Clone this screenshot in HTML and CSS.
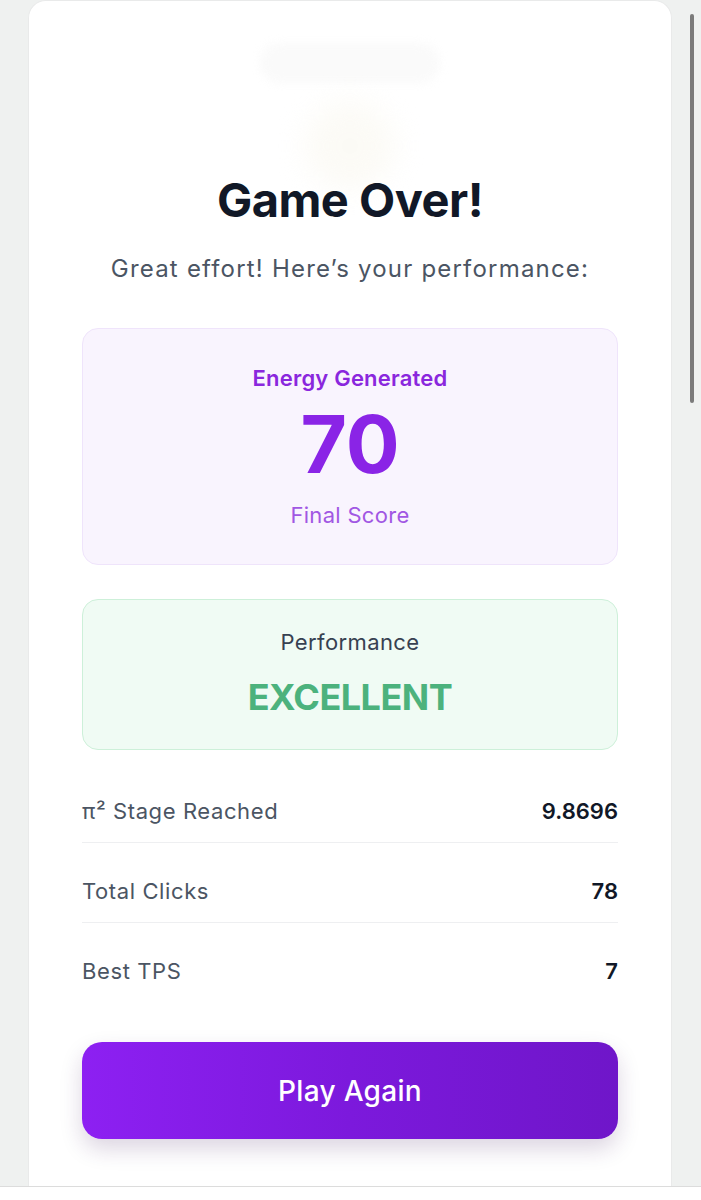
FILE: index.html
```html
<!DOCTYPE html>
<html lang="en">
<head>
    <meta charset="UTF-8">
    <meta name="viewport" content="width=device-width, initial-scale=1.0">
    <title>Game Over</title>
    <link rel="stylesheet" href="styles.css">
</head>
<body>
    <div class="page">
        <main class="card">
            <div class="ghost-pill"></div>
            <div class="ghost-orb"></div>
            <h1 class="title">Game Over!</h1>
            <p class="subtitle">Great effort! Here’s your performance:</p>

            <section class="score-box">
                <p class="score-label">Energy Generated</p>
                <p class="score-value">70</p>
                <p class="score-caption">Final Score</p>
            </section>

            <section class="rating-box">
                <p class="rating-label">Performance</p>
                <p class="rating-value">EXCELLENT</p>
            </section>

            <div class="stats">
                <div class="stat">
                    <span class="stat-name">π² Stage Reached</span>
                    <span class="stat-value">9.8696</span>
                </div>
                <div class="stat">
                    <span class="stat-name">Total Clicks</span>
                    <span class="stat-value">78</span>
                </div>
                <div class="stat">
                    <span class="stat-name">Best TPS</span>
                    <span class="stat-value">7</span>
                </div>
            </div>

            <button class="play-btn" type="button">Play Again</button>
        </main>
    </div>
    <div class="bottom-bar"></div>
    <div class="scroll-thumb"></div>
</body>
</html>
```

FILE: styles.css
```css
html, body {
    margin: 0;
    padding: 0;
    height: 100%;
    overflow: hidden;
}
body {
    font-family: Inter, "Liberation Sans", sans-serif;
    background-color: #eff1f0;
}
p {
    margin: 0;
}
.page {
    height: 1186px;
    padding: 0 29px 0 28px;
    box-sizing: border-box;
}
.card {
    position: relative;
    height: 100%;
    box-sizing: border-box;
    background-color: #fff;
    border: 1px solid #e9eaea;
    border-bottom: none;
    border-radius: 18px 18px 0 0;
    padding: 0 53px;
    overflow: hidden;
}
.ghost-pill {
    position: absolute;
    top: 42px;
    left: 231px;
    width: 180px;
    height: 40px;
    border-radius: 20px;
    background-color: #f8f8f8;
    filter: blur(5px);
    opacity: 0.7;
}
.ghost-orb {
    position: absolute;
    top: 100px;
    left: 276px;
    width: 90px;
    height: 90px;
    border-radius: 50%;
    background-color: #faf8f0;
    filter: blur(14px);
    opacity: 0.6;
}
.title {
    position: relative;
    margin: 171px 0 0;
    text-align: center;
    font-size: 47px;
    line-height: 56px;
    font-weight: 700;
    letter-spacing: -0.5px;
    color: #111827;
}
.subtitle {
    margin-top: 25px;
    text-align: center;
    font-size: 24px;
    line-height: 32px;
    letter-spacing: 1.2px;
    color: #4b5563;
}
.score-box {
    margin-top: 43px;
    height: 237px;
    box-sizing: border-box;
    padding-top: 35px;
    background-color: #f9f4fe;
    border: 1px solid #efe4fb;
    border-radius: 16px;
    text-align: center;
}
.score-label {
    font-size: 22px;
    line-height: 28px;
    font-weight: 600;
    letter-spacing: 0.2px;
    color: #8a27dd;
}
.score-value {
    margin-top: 12px;
    font-size: 80px;
    line-height: 80px;
    font-weight: 700;
    color: #8a24e6;
}
.score-caption {
    margin-top: 17px;
    font-size: 22px;
    line-height: 28px;
    letter-spacing: 0.3px;
    color: #a157e3;
}
.rating-box {
    margin-top: 34px;
    height: 151px;
    box-sizing: border-box;
    padding-top: 28px;
    background-color: #f0fbf4;
    border: 1px solid #cdf0d9;
    border-radius: 16px;
    text-align: center;
}
.rating-label {
    font-size: 22px;
    line-height: 28px;
    letter-spacing: 0.4px;
    color: #374151;
}
.rating-value {
    margin-top: 19px;
    font-size: 36px;
    line-height: 44px;
    font-weight: 700;
    letter-spacing: -0.5px;
    color: #4cb27d;
}
.stats {
    margin-top: 47px;
    display: flex;
    flex-direction: column;
    gap: 34px;
}
.stat {
    display: flex;
    justify-content: space-between;
    font-size: 22px;
    line-height: 28px;
    padding-bottom: 17px;
    border-bottom: 1px solid #eeeff1;
}
.stat:last-child {
    padding-bottom: 0;
    border-bottom: none;
}
.stat-name {
    letter-spacing: 0.6px;
    color: #4b5563;
}
.stat-value {
    font-weight: 600;
    color: #111827;
}
.play-btn {
    display: block;
    width: 100%;
    height: 97px;
    margin-top: 57px;
    border: none;
    border-radius: 20px;
    background: linear-gradient(90deg, #8d20f2 0%, #7c19dc 50%, #6f16c9 100%);
    box-shadow: 0 10px 22px rgba(60, 20, 90, 0.18);
    color: #fff;
    font-family: inherit;
    font-size: 28px;
    font-weight: 500;
    letter-spacing: 0.3px;
    cursor: pointer;
}
.bottom-bar {
    height: 14px;
    background-color: #fff;
    border-top: 1px solid #dcdcdc;
}
.scroll-thumb {
    position: fixed;
    top: 14px;
    right: 7px;
    width: 4px;
    height: 389px;
    border-radius: 2px;
    background-color: #7b7b7b;
}
```
